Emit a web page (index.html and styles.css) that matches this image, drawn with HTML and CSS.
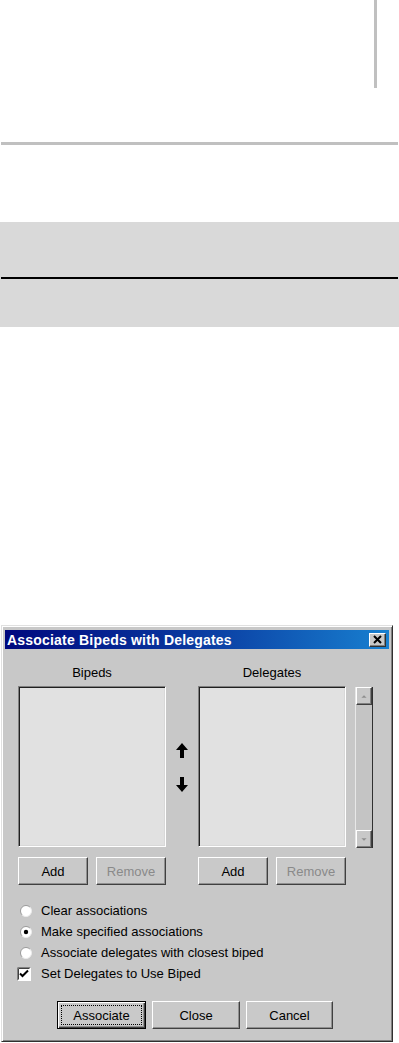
FILE: index.html
```html
<!DOCTYPE html>
<html>
<head>
<meta charset="utf-8">
<link rel="stylesheet" href="styles.css">
</head>
<body>
<div class="page">
  <div class="vline"></div>
  <div class="hline"></div>
  <div class="band"><div class="band-line"></div></div>

  <div class="dialog">
    <div class="titlebar">
      <span class="title">Associate Bipeds with Delegates</span>
      <span class="xbtn"><svg width="15" height="12" viewBox="0 0 15 12"><path d="M4 2 L11 9 M11 2 L4 9" stroke="#000" stroke-width="2" fill="none"/></svg></span>
    </div>
    <div class="body">
      <div class="lists">
        <div class="col">
          <div class="label">Bipeds</div>
          <div class="listbox"></div>
        </div>
        <div class="mid">
          <svg width="12" height="15" viewBox="0 0 12 15"><path d="M6 0 L12 7 L8 7 L8 15 L4 15 L4 7 L0 7 Z" fill="#000"/></svg>
          <svg width="12" height="15" viewBox="0 0 12 15"><path d="M6 15 L12 8 L8 8 L8 0 L4 0 L4 8 L0 8 Z" fill="#000"/></svg>
        </div>
        <div class="col">
          <div class="label">Delegates</div>
          <div class="listbox"></div>
        </div>
        <div class="scroll">
          <div class="sbtn"><svg width="16" height="15" viewBox="0 0 16 15"><path d="M5 9 L8 6 L11 9 Z" fill="#909090"/></svg></div>
          <div class="sbtn"><svg width="16" height="15" viewBox="0 0 16 15"><path d="M5 6 L8 9 L11 6 Z" fill="#909090"/></svg></div>
        </div>
      </div>

      <div class="btnrow">
        <div class="group">
          <div class="btn">Add</div>
          <div class="btn disabled">Remove</div>
        </div>
        <div class="group">
          <div class="btn">Add</div>
          <div class="btn disabled">Remove</div>
        </div>
      </div>

      <div class="options">
        <div class="opt">
          <svg class="radio" width="12" height="12" viewBox="0 0 12 12"><circle cx="6" cy="6" r="5.5" fill="#fff"/><path d="M2.1 9.9 A5.5 5.5 0 0 1 9.9 2.1" stroke="#9a9a9a" fill="none"/><path d="M2.1 9.9 A5.5 5.5 0 0 0 9.9 2.1" stroke="#ececec" fill="none"/></svg>
          <span>Clear associations</span>
        </div>
        <div class="opt">
          <svg class="radio" width="12" height="12" viewBox="0 0 12 12"><circle cx="6" cy="6" r="5.5" fill="#fff"/><path d="M2.1 9.9 A5.5 5.5 0 0 1 9.9 2.1" stroke="#9a9a9a" fill="none"/><path d="M2.1 9.9 A5.5 5.5 0 0 0 9.9 2.1" stroke="#ececec" fill="none"/><circle cx="6" cy="6" r="2.2" fill="#000"/></svg>
          <span>Make specified associations</span>
        </div>
        <div class="opt">
          <svg class="radio" width="12" height="12" viewBox="0 0 12 12"><circle cx="6" cy="6" r="5.5" fill="#fff"/><path d="M2.1 9.9 A5.5 5.5 0 0 1 9.9 2.1" stroke="#9a9a9a" fill="none"/><path d="M2.1 9.9 A5.5 5.5 0 0 0 9.9 2.1" stroke="#ececec" fill="none"/></svg>
          <span>Associate delegates with closest biped</span>
        </div>
        <div class="opt">
          <svg class="check" width="14" height="14" viewBox="0 0 14 14"><rect x="0" y="0" width="14" height="14" fill="#fff"/><path d="M0.5 13.5 V0.5 H13.5" stroke="#808080" fill="none"/><path d="M1.5 12.5 V1.5 H12.5" stroke="#404040" fill="none"/><path d="M3 6.5 L5.5 9 L11 3.5" stroke="#000" stroke-width="2" fill="none"/></svg>
          <span>Set Delegates to Use Biped</span>
        </div>
      </div>

      <div class="actions">
        <div class="btn default"><span class="focus">Associate</span></div>
        <div class="btn w88">Close</div>
        <div class="btn w87">Cancel</div>
      </div>
    </div>
  </div>
</div>
</body>
</html>
```

FILE: styles.css
```css
html, body {
  margin: 0;
  padding: 0;
  background: #fff;
}

.page {
  width: 399px;
  font-family: "Liberation Sans", Arial, sans-serif;
}

.vline {
  margin-left: 374px;
  width: 3px;
  height: 88px;
  background: #c0c0c0;
}

.hline {
  margin: 54px 1px 0;
  height: 3px;
  background: #c0c0c0;
}

.band {
  margin-top: 77px;
  height: 105px;
  padding-top: 55px;
  box-sizing: border-box;
  background: #d9d9d9;
}

.band-line {
  margin: 0 1px;
  height: 2px;
  background: #000;
}

.dialog {
  margin-top: 298px;
  margin-left: 1px;
  width: 392px;
  height: 417px;
  box-sizing: border-box;
  background: #c8c8c8;
  border: 1px solid;
  border-color: #e0e0e0 #303030 #303030 #e0e0e0;
  box-shadow: inset 1px 1px #fff, inset -1px -1px #808080;
  padding: 4px 3px 3px 3px;
  font-size: 13px;
  color: #000;
}

.titlebar {
  display: flex;
  align-items: center;
  height: 19px;
  padding-left: 2px;
  background: linear-gradient(90deg, #00087e 0%, #0a3aa0 50%, #1880d0 100%);
}

.title {
  color: #fff;
  font-weight: bold;
  font-size: 14px;
  letter-spacing: 0.2px;
}

.xbtn {
  margin-left: auto;
  margin-right: 3px;
  width: 17px;
  height: 14px;
  box-sizing: border-box;
  background: #c8c8c8;
  border: 1px solid;
  border-color: #fff #303030 #303030 #fff;
  box-shadow: inset -1px -1px #808080;
  display: flex;
  align-items: center;
  justify-content: center;
}

.body {
  padding: 16px 0 0 13px;
}

.lists {
  display: flex;
}

.col {
  width: 148px;
}

.label {
  height: 16px;
  line-height: 16px;
  text-align: center;
  margin-bottom: 5px;
}

.listbox {
  height: 161px;
  box-sizing: border-box;
  background: #e1e1e1;
  border: 1px solid;
  border-color: #808080 #fff #fff #808080;
  box-shadow: inset 1px 1px #202020, inset -1px -1px #d8d8d8;
}

.mid {
  width: 32px;
  padding-top: 21px;
  display: flex;
  flex-direction: column;
  align-items: center;
  justify-content: center;
  gap: 19px;
}

.scroll {
  margin-left: 9px;
  margin-top: 22px;
  width: 18px;
  height: 161px;
  box-sizing: border-box;
  background: #c4c4c4;
  border-left: 1px solid #e8e8e8;
  border-right: 1px solid #303030;
  display: flex;
  flex-direction: column;
  justify-content: space-between;
}

.sbtn {
  height: 18px;
  box-sizing: border-box;
  background: #c8c8c8;
  border: 1px solid;
  border-color: #fff #404040 #404040 #fff;
  box-shadow: inset -1px -1px #808080;
  display: flex;
  align-items: center;
  justify-content: center;
}

.btnrow {
  margin-top: 9px;
  display: flex;
  gap: 32px;
}

.group {
  width: 148px;
  display: flex;
  gap: 8px;
}

.btn {
  width: 70px;
  height: 28px;
  box-sizing: border-box;
  background: #c9c9c9;
  border: 1px solid;
  border-color: #fff #404040 #404040 #fff;
  box-shadow: inset -1px -1px #909090;
  display: flex;
  align-items: center;
  justify-content: center;
  font-size: 13px;
}

.btn.disabled {
  color: #8a8a8a;
}

.options {
  margin-top: 15px;
}

.opt {
  height: 21px;
  display: flex;
  align-items: center;
}

.radio {
  margin-left: 2px;
  margin-right: 9px;
}

.check {
  margin-left: -1px;
  margin-right: 10px;
}

.actions {
  margin-top: 17px;
  margin-left: 39px;
  display: flex;
  gap: 6px;
}

.btn.default {
  width: 89px;
  border: 1px solid #000;
  box-shadow: inset 1px 1px #fff, inset -1px -1px #404040, inset -2px -2px #909090;
  padding: 3px 3px 3px 3px;
}

.focus {
  flex: 1;
  align-self: stretch;
  border: 1px dotted #000;
  display: flex;
  align-items: center;
  justify-content: center;
}

.btn.w88 {
  width: 88px;
}

.btn.w87 {
  width: 87px;
}
```
